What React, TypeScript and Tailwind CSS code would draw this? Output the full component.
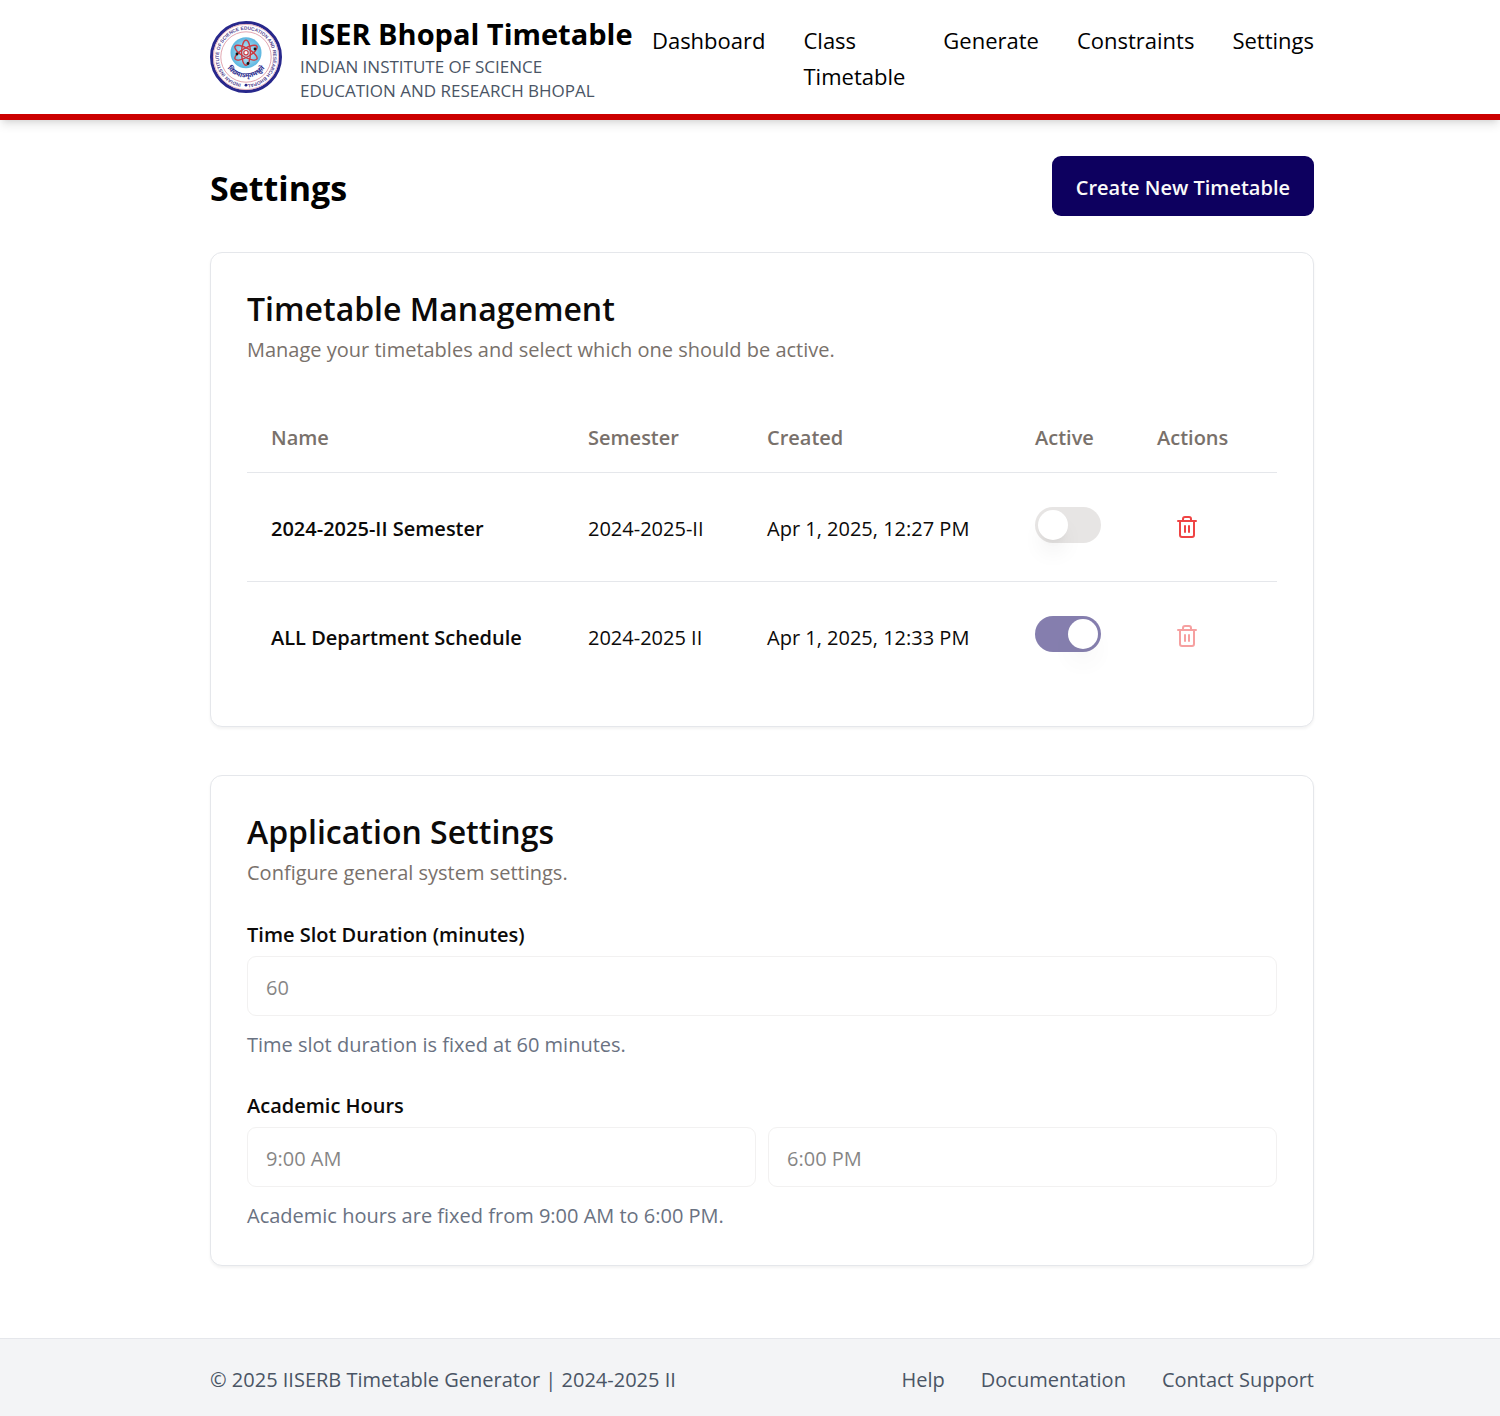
import { useState } from "react";
import { Trash2 } from "lucide-react";

const navItems = ["Dashboard", "Class Timetable", "Generate", "Constraints", "Settings"];
const footerLinks = ["Help", "Documentation", "Contact Support"];

const timetables = [
  { id: 1, name: "2024-2025-II Semester", semester: "2024-2025-II", created: "Apr 1, 2025, 12:27 PM" },
  { id: 2, name: "ALL Department Schedule", semester: "2024-2025 II", created: "Apr 1, 2025, 12:33 PM" },
];

function Logo() {
  return (
    <svg viewBox="0 0 72 72" className="size-18 shrink-0" role="img" aria-label="IISER Bhopal emblem">
      <defs>
        <path id="ring" d="M36 63.2A27.2 27.2 0 1 1 36.1 63.2" />
        <path id="motto" d="M15 43A23 23 0 0 0 57 43" />
        <radialGradient id="sky">
          <stop offset="0" stopColor="#d4f1fb" />
          <stop offset="1" stopColor="#5cb6e0" />
        </radialGradient>
      </defs>
      <circle cx="36" cy="36" r="34.5" fill="#fff" stroke="#28288c" strokeWidth="3" />
      <circle cx="36" cy="36" r="32.6" fill="none" stroke="#e2a3ad" strokeWidth="0.8" />
      <circle cx="36" cy="36" r="25.2" fill="none" stroke="#d98f9c" strokeWidth="0.8" />
      <text fontSize="4.8" fontWeight="700" fill="#54468f" fontFamily="Liberation Sans, sans-serif">
        <textPath href="#ring" startOffset="5">
          INDIAN INSTITUTE OF SCIENCE EDUCATION AND RESEARCH BHOPAL
        </textPath>
      </text>
      <circle cx="36" cy="64.2" r="1.4" fill="#28288c" />
      <circle cx="36" cy="31.7" r="15.5" fill="url(#sky)" />
      <g fill="none" stroke="#cc3a42" strokeWidth="1.4">
        <ellipse cx="36" cy="31.7" rx="4.4" ry="12.6" />
        <ellipse cx="36" cy="31.7" rx="4.4" ry="12.6" transform="rotate(60 36 31.7)" />
        <ellipse cx="36" cy="31.7" rx="4.4" ry="12.6" transform="rotate(120 36 31.7)" />
      </g>
      <circle cx="36" cy="31.7" r="2.2" fill="#fff" stroke="#cc3a42" strokeWidth="1.2" />
      <circle cx="27" cy="33" r="1.4" fill="#111" />
      <circle cx="45" cy="28" r="1.4" fill="#111" />
      <circle cx="38" cy="42.5" r="1.4" fill="#111" />
      <text fontSize="6.8" fontWeight="700" fill="#28288c" textAnchor="middle" fontFamily="Noto Sans, sans-serif">
        <textPath href="#motto" startOffset="50%">
          विद्ययाऽमृतमश्नुते
        </textPath>
      </text>
    </svg>
  );
}

function Card({ title, description, children }: { title: string; description: string; children: React.ReactNode }) {
  return (
    <section className="rounded-xl border border-gray-200 bg-white px-9 pt-[38px] pb-9 text-stone-950 shadow-[0_2px_3px_0_rgba(0,0,0,0.05)]">
      <h2 className="text-[32px] leading-9 font-semibold">{title}</h2>
      <p className="mt-2 mb-[35px] text-[20px] leading-[30px] text-stone-500">{description}</p>
      {children}
    </section>
  );
}

function Toggle({ label, checked, onChange }: { label: string; checked: boolean; onChange: () => void }) {
  return (
    <input
      type="checkbox"
      role="switch"
      aria-label={label}
      checked={checked}
      disabled={checked}
      onChange={onChange}
      className="block h-9 w-[66px] appearance-none rounded-full bg-stone-200 p-[3px] before:block before:size-[30px] before:rounded-full before:bg-white before:shadow-[0_15px_22px_-4px_rgba(0,0,0,0.08),0_6px_9px_-6px_rgba(0,0,0,0.08)] checked:bg-[#0d005f] checked:opacity-50 checked:before:translate-x-[30px]"
    />
  );
}

const inputClass =
  "h-15 w-full min-w-0 rounded-[9px] border border-stone-200 bg-white px-[18px] pt-1 text-[20px] text-stone-950 opacity-50";
const labelClass = "mb-[9px] block text-[20px] leading-6 font-semibold";
const helpClass = "mt-[14px] mb-[-2px] text-[20px] leading-[30px] text-gray-500";
const cellClass = "px-6 pt-[26px] pb-[22px] whitespace-nowrap";
const shell = "mx-auto w-full max-w-[1152px] px-6";

export default function App() {
  const [active, setActive] = useState(2);

  return (
    <div className="flex min-h-screen flex-col bg-white font-['Open_Sans','Noto_Sans',sans-serif] text-black">
      <header className="border-b-6 border-[#cc0000] bg-white pl-6 shadow-[0_6px_9px_-1px_rgba(0,0,0,0.1),0_3px_6px_-3px_rgba(0,0,0,0.1)]">
        <div className={`${shell} flex items-center justify-between py-[11px]`}>
          <div className="flex items-center gap-[18px]">
            <Logo />
            <div className="w-[336px] pt-[2px]">
              <p className="text-[29px] leading-[42px] font-bold whitespace-nowrap">IISER Bhopal Timetable</p>
              <p className="text-[17px] leading-6 text-gray-600">
                INDIAN INSTITUTE OF SCIENCE EDUCATION AND RESEARCH BHOPAL
              </p>
            </div>
          </div>
          <nav className="pt-[2px]">
            <ul className="flex items-start gap-[38px] text-[22px] leading-9">
              {navItems.map((item) => (
                <li key={item} className="w-min">
                  <a href="#">{item}</a>
                </li>
              ))}
            </ul>
          </nav>
        </div>
      </header>

      <main className="grow pl-6">
        <div className={`${shell} pt-9 pb-18`}>
          <div className="mb-9 flex items-center justify-between">
            <h1 className="pt-1 text-[34px] leading-12 font-bold">Settings</h1>
            <button className="h-15 rounded-[9px] bg-[#0d005f] px-6 pt-1 text-[20px] font-semibold text-stone-50">
              Create New Timetable
            </button>
          </div>

          <div className="flex flex-col gap-12">
            <Card title="Timetable Management" description="Manage your timetables and select which one should be active.">
              <table className="w-full table-fixed text-left text-[20px] leading-[30px]">
                <colgroup>
                  <col className="w-[317px]" />
                  <col className="w-[179px]" />
                  <col className="w-[268px]" />
                  <col className="w-[122px]" />
                  <col className="w-[144px]" />
                </colgroup>
                <thead>
                  <tr className="h-18 border-b border-gray-200 text-stone-500">
                    {["Name", "Semester", "Created", "Active", "Actions"].map((heading) => (
                      <th key={heading} scope="col" className="px-6 pt-1 font-semibold">
                        {heading}
                      </th>
                    ))}
                  </tr>
                </thead>
                <tbody>
                  {timetables.map((row) => (
                    <tr key={row.id} className="border-b border-gray-200 last:border-0">
                      <td className={`${cellClass} font-semibold`}>{row.name}</td>
                      <td className={cellClass}>{row.semester}</td>
                      <td className={cellClass}>{row.created}</td>
                      <td className="px-6 pt-[22px] pb-[26px]">
                        <Toggle
                          label={`Set ${row.name} active`}
                          checked={active === row.id}
                          onChange={() => setActive(row.id)}
                        />
                      </td>
                      <td className="p-6">
                        <button
                          aria-label={`Delete ${row.name}`}
                          disabled={active === row.id}
                          className="flex size-15 items-center justify-center rounded-[9px] text-[#ef4444] disabled:opacity-50"
                        >
                          <Trash2 size={24} />
                        </button>
                      </td>
                    </tr>
                  ))}
                </tbody>
              </table>
            </Card>

            <Card title="Application Settings" description="Configure general system settings.">
              <div className="flex flex-col gap-9">
                <div>
                  <label htmlFor="slot" className={labelClass}>
                    Time Slot Duration (minutes)
                  </label>
                  <input id="slot" type="text" disabled defaultValue="60" className={`${inputClass} block`} />
                  <p className={helpClass}>Time slot duration is fixed at 60 minutes.</p>
                </div>
                <div>
                  <label htmlFor="start" className={labelClass}>
                    Academic Hours
                  </label>
                  <div className="grid grid-cols-2 gap-3">
                    <input id="start" type="text" disabled defaultValue="9:00 AM" className={inputClass} />
                    <input aria-label="End of academic hours" type="text" disabled defaultValue="6:00 PM" className={inputClass} />
                  </div>
                  <p className={helpClass}>Academic hours are fixed from 9:00 AM to 6:00 PM.</p>
                </div>
              </div>
            </Card>
          </div>
        </div>
      </main>

      <footer className="border-t border-gray-200 bg-gray-100 pl-6 text-[20px] leading-[30px] text-gray-600">
        <div className={`${shell} flex justify-between pt-[26px] pb-[21px]`}>
          <p>© 2025 IISERB Timetable Generator | 2024-2025 II</p>
          <nav className="flex gap-9">
            {footerLinks.map((link) => (
              <a key={link} href="#">
                {link}
              </a>
            ))}
          </nav>
        </div>
      </footer>
    </div>
  );
}
